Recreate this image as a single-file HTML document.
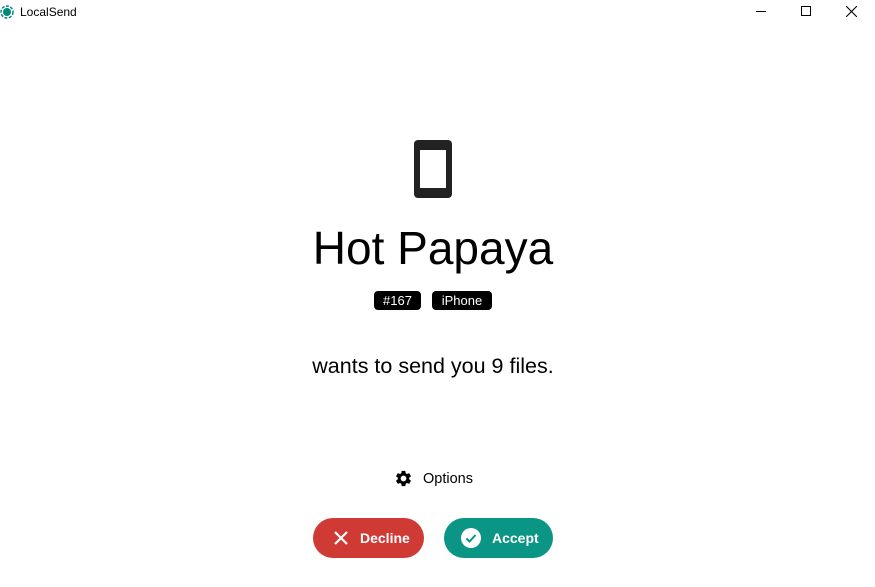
<!DOCTYPE html>
<html><head><style>
body{margin:0;width:875px;height:587px;background:#fff;font-family:"Liberation Sans",sans-serif;position:relative;overflow:hidden}
.a{position:absolute}
.badge{position:absolute;top:291px;height:19px;background:#000;color:#fff;border-radius:4px;font-size:13px;line-height:19px;text-align:center}
.btn{position:absolute;top:518px;height:40px;border-radius:20px;color:#fff;font-weight:bold;font-size:14px;line-height:40px}
</style></head><body>
<svg class="a" style="left:0;top:5px" width="15" height="15"><circle cx="7" cy="7" r="6" fill="none" stroke="#00897b" stroke-width="1.5" stroke-dasharray="3 1.5"/><circle cx="7" cy="7" r="4" fill="#00897b"/></svg>
<div class="a" style="left:20px;top:5px;font-size:12px">LocalSend</div>
<div class="a" style="left:756px;top:11px;width:10px;height:1px;background:#000"></div>
<div class="a" style="left:801px;top:6px;width:8px;height:8px;border:1px solid #000"></div>
<svg class="a" style="left:846px;top:6px" width="11" height="11"><path d="M0 0L11 11M11 0L0 11" stroke="#000" stroke-width="1.1"/></svg>
<svg class="a" style="left:414px;top:140px" width="38" height="58"><rect x="0" y="0" width="38" height="58" rx="4" fill="#222"/><rect x="6" y="10" width="26" height="38" fill="#fff"/></svg>
<div class="a" style="left:0;width:866px;top:221px;text-align:center;font-size:46px;line-height:54px">Hot Papaya</div>
<div class="badge" style="left:374px;width:47px">#167</div>
<div class="badge" style="left:432px;width:60px">iPhone</div>
<div class="a" style="left:0;width:866px;top:354px;text-align:center;font-size:21.5px">wants to send you 9 files.</div>
<svg class="a" style="left:394px;top:469px" width="19" height="19" viewBox="0 0 24 24"><path fill="#000" d="M19.14 12.94c.04-.3.06-.61.06-.94s-.02-.64-.07-.94l2.03-1.58a.49.49 0 00.12-.61l-1.920-3.32a.49.49 0 00-.59-.22l-2.39.96c-.5-.38-1.03-.7-1.62-.94l-.36-2.540a.48.48 0 00-.48-.41h-3.84a.48.48 0 00-.47.41l-.36 2.54c-.59.24-1.13.57-1.62.94l-2.39-.96a.48.48 0 00-.59.22L2.74 8.87a.47.47 0 00.12.61l2.03 1.58c-.05.3-.09.63-.09.94s.02.64.07.94l-2.03 1.58a.49.49 0 00-.12.61l1.92 3.32c.12.22.37.29.59.22l2.39-.96c.5.38 1.03.7 1.62.94l.36 2.54c.05.24.24.41.48.41h3.84c.24 0 .44-.17.47-.41l.36-2.54c.59-.24 1.130-.56 1.62-.94l2.39.96c.22.08.47 0 .59-.22l1.92-3.32a.49.49 0 00-.12-.61l-2.01-1.58zM12 15.6A3.6 3.6 0 1112 8.4a3.6 3.6 0 010 7.2z"/></svg>
<div class="a" style="left:423px;top:471px;font-size:14.5px">Options</div>
<div class="btn" style="left:313px;width:111px;background:#d03a35">
<svg class="a" style="left:21px;top:13px" width="14" height="14"><path d="M1 1L13 13M13 1L1 13" stroke="#fff" stroke-width="2.2"/></svg>
<span class="a" style="left:47px">Decline</span></div>
<div class="btn" style="left:444px;width:109px;background:#0b9584">
<svg class="a" style="left:17px;top:10px" width="20" height="20"><circle cx="10" cy="10" r="10" fill="#fff"/><path d="M5.5 10.5L8.5 13.5L14.5 7" stroke="#0b9584" stroke-width="2" fill="none"/></svg>
<span class="a" style="left:48px">Accept</span></div>
</body></html>
